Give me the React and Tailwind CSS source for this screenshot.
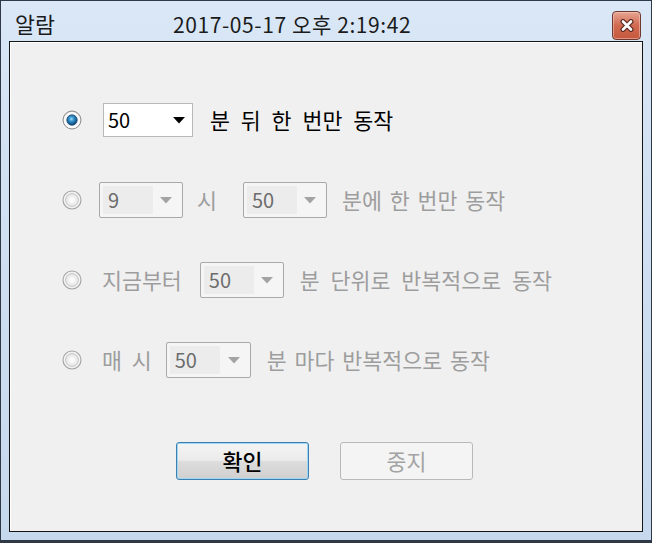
import React from "react";

function Radio({ checked }) {
  if (checked) {
    return (
      <svg width="20" height="20" viewBox="0 0 20 20" className="shrink-0">
        <defs>
          <linearGradient id="rg1" x1="0" y1="0" x2="0" y2="1">
            <stop offset="0" stopColor="#cfcfcf" />
            <stop offset="1" stopColor="#fbfbfb" />
          </linearGradient>
          <radialGradient id="dot1" cx="0.45" cy="0.4" r="0.6">
            <stop offset="0" stopColor="#9fe0ff" />
            <stop offset="0.35" stopColor="#3c97cf" />
            <stop offset="0.8" stopColor="#135c91" />
            <stop offset="1" stopColor="#0c3f69" />
          </radialGradient>
        </defs>
        <circle cx="10" cy="10" r="9" fill="url(#rg1)" stroke="#8c8c8c" strokeWidth="1" />
        <circle cx="10" cy="10" r="7.5" fill="#f6f6f6" stroke="#ffffff" strokeWidth="1" />
        <circle cx="10" cy="10" r="5.2" fill="url(#dot1)" stroke="#1d4f78" strokeWidth="0.8" />
      </svg>
    );
  }
  return (
    <svg width="20" height="20" viewBox="0 0 20 20" className="shrink-0">
      <defs>
        <radialGradient id="dis1" cx="0.5" cy="0.5" r="0.6">
          <stop offset="0" stopColor="#ffffff" />
          <stop offset="0.6" stopColor="#ececec" />
          <stop offset="1" stopColor="#cfcfcf" />
        </radialGradient>
      </defs>
      <circle cx="10" cy="10" r="9" fill="#f3f3f3" stroke="#a2a2a2" strokeWidth="1.1" />
      <circle cx="10" cy="10" r="6.5" fill="url(#dis1)" stroke="#c2c2c2" strokeWidth="0.8" />
    </svg>
  );
}

function Arrow({ color }) {
  return (
    <svg width="12" height="7" viewBox="0 0 12 7" className="shrink-0">
      <polygon points="0,0 12,0 6,6.5" fill={color} />
    </svg>
  );
}

function ComboEnabled({ value }) {
  return (
    <div className="w-[90px] h-[34px] bg-white border border-[#b8b8b8] flex items-center pl-[4px] pr-[7px] shrink-0">
      <span className="text-[20px] leading-none text-black">{value}</span>
      <span className="ml-auto flex">
        <Arrow color="#000000" />
      </span>
    </div>
  );
}

function ComboDisabled({ value, w = "w-[84px]" }) {
  return (
    <div className={`${w} h-[36px] bg-[#f5f5f5] border border-[#a9a9a9] rounded-[2px] flex items-center pl-[3px] pr-[10px] shrink-0`}>
      <span className="w-[50px] h-[28px] bg-[#ececec] flex items-center pl-[5px] text-[20px] leading-none text-[#6c6c6c]">
        {value}
      </span>
      <span className="ml-auto flex">
        <Arrow color="#a3a3a3" />
      </span>
    </div>
  );
}

export default function App() {
  return (
    <div className="w-[652px] h-[543px] border border-b-[3px] border-[#2e3945] bg-gradient-to-b from-[#d9e7f6] via-[#cfdff1] to-[#c6d8ed] flex flex-col font-['Noto_Sans_CJK_KR',sans-serif] text-[21.7px] leading-none">
      {/* Title bar */}
      <div className="h-[40px] flex items-center shrink-0">
        <span className="ml-[14px] mt-[6px] text-[#1b1b1b] text-[21.7px]">알람</span>
        <span className="ml-[118px] mt-[6px] text-[#1b1b1b] text-[21px] tracking-[0.6px]">2017-05-17 오후 2:19:42</span>
        <div className="ml-auto mr-[10px] mt-[9px] w-[29px] h-[29px] rounded-[4px] border border-[#6e3a2f] bg-gradient-to-b from-[#e7a492] via-[#d06a51] to-[#c5583d] shadow-[inset_0_0_0_1px_rgba(255,220,210,0.45)] flex items-center justify-center">
          <svg width="14" height="13" viewBox="0 0 14 13">
            <path d="M3 2.5 L11 10.5 M11 2.5 L3 10.5" stroke="#5a2a20" strokeWidth="5" strokeLinecap="round" />
            <path d="M3 2.5 L11 10.5 M11 2.5 L3 10.5" stroke="#ffffff" strokeWidth="2.6" strokeLinecap="round" />
          </svg>
        </div>
      </div>

      {/* Client area */}
      <div className="flex-1 mx-[8px] mb-[8px] border border-[#151515] bg-[#f0f0f0] shadow-[inset_1px_1px_0_#ffffff] flex flex-col">
        <div className="pl-[52px] pt-[60px] flex flex-col gap-[44px]">
          {/* Row 1 */}
          <div className="h-[36px] flex items-center">
            <Radio checked />
            <div className="ml-[21px]">
              <ComboEnabled value="50" />
            </div>
            <span className="ml-[17px] text-black [word-spacing:6px]">분 뒤 한 번만 동작</span>
          </div>

          {/* Row 2 */}
          <div className="h-[36px] flex items-center">
            <Radio />
            <div className="ml-[17px]">
              <ComboDisabled value="9" />
            </div>
            <span className="ml-[14px] text-[#9d9d9d]">시</span>
            <div className="ml-[26px]">
              <ComboDisabled value="50" />
            </div>
            <span className="ml-[15px] text-[#9d9d9d] [word-spacing:3px]">분에 한 번만 동작</span>
          </div>

          {/* Row 3 */}
          <div className="h-[36px] flex items-center">
            <Radio />
            <span className="ml-[20px] text-[#9d9d9d]">지금부터</span>
            <div className="ml-[18px]">
              <ComboDisabled value="50" />
            </div>
            <span className="ml-[16px] text-[#9d9d9d] [word-spacing:6px]">분 단위로 반복적으로 동작</span>
          </div>

          {/* Row 4 */}
          <div className="h-[36px] flex items-center">
            <Radio />
            <span className="ml-[20px] text-[#9d9d9d] [word-spacing:5px]">매 시</span>
            <div className="ml-[14px]">
              <ComboDisabled value="50" w="w-[85px]" />
            </div>
            <span className="ml-[16px] text-[#9d9d9d] [word-spacing:3px]">분 마다 반복적으로 동작</span>
          </div>
        </div>

        {/* Buttons */}
        <div className="mt-[64px] flex justify-center gap-[31px] pr-[3px]">
          <div className="w-[133px] h-[38px] rounded-[3px] border border-[#3c7fb1] shadow-[inset_0_0_0_1px_#9fd6f2] bg-[linear-gradient(to_bottom,#f4f4f4_0%,#ebebeb_48%,#dcdcdc_52%,#d0d0d0_100%)] flex items-center justify-center">
            <span className="text-black font-medium">확인</span>
          </div>
          <div className="w-[133px] h-[38px] rounded-[3px] border border-[#b9b9b9] bg-[#f4f4f4] flex items-center justify-center">
            <span className="text-[#a3a3a3]">중지</span>
          </div>
        </div>
      </div>
    </div>
  );
}
